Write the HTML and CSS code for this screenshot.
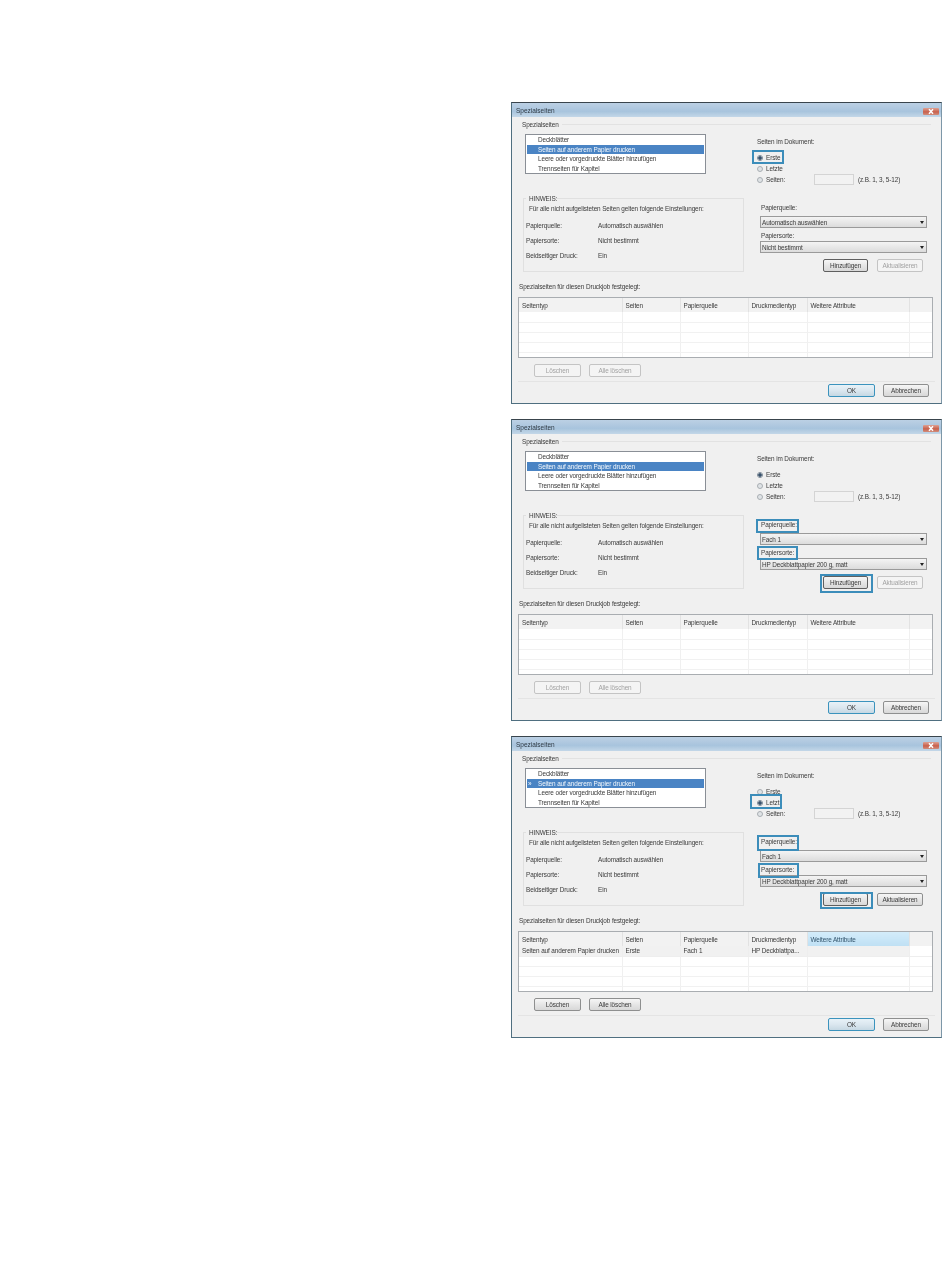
FILE: index.html
```html
<!DOCTYPE html>
<html lang="de">
<head>
<meta charset="utf-8">
<title>Spezialseiten</title>
<link rel="stylesheet" href="styles.css">
</head>
<body>
<main class="page">

<section class="dialog">
  <header class="titlebar"><span>Spezialseiten</span><span class="close"><svg viewBox="0 0 16 7" width="16" height="7"><path d="M6 1.2l4 4.6M10 1.2l-4 4.6" stroke="#fff" stroke-width="1.5"/></svg></span></header>
  <div class="content">
    <div class="section-head"><span>Spezialseiten</span><i></i></div>
    <div class="upper">
      <ul class="listbox"><li>Deckblätter</li><li class="sel">Seiten auf anderem Papier drucken</li><li>Leere oder vorgedruckte Blätter hinzufügen</li><li>Trennseiten für Kapitel</li></ul>
      <div class="pages">
        <div class="pages-title">Seiten im Dokument:</div>
        <div class="radio"><b class="dot on"></b>Erste</div>
        <div class="radio"><b class="dot"></b>Letzte</div>
        <div class="radio"><b class="dot"></b><span class="r-label">Seiten:</span><span class="field"></span><span>(z.B. 1, 3, 5-12)</span></div>
      </div>
      <div class="hint">
        <div class="hint-title">HINWEIS:</div>
        <div class="hint-text">Für alle nicht aufgelisteten Seiten gelten folgende Einstellungen:</div>
        <div class="hint-row"><span>Papierquelle:</span><span>Automatisch auswählen</span></div>
        <div class="hint-row"><span>Papiersorte:</span><span>Nicht bestimmt</span></div>
        <div class="hint-row"><span>Beidseitiger Druck:</span><span>Ein</span></div>
      </div>
      <div class="paper">
        <div class="p-label">Papierquelle:</div>
        <div class="select"><span>Automatisch auswählen</span><b></b></div>
        <div class="p-label two">Papiersorte:</div>
        <div class="select"><span>Nicht bestimmt</span><b></b></div>
        <div class="add-row"><span class="btn strong">Hinzufügen</span><span class="btn off">Aktualisieren</span></div>
      </div>
    </div>
    <div class="table-title">Spezialseiten für diesen Druckjob festgelegt:</div>
    <div class="table-wrap"><table>
      <thead><tr><th>Seitentyp</th><th>Seiten</th><th>Papierquelle</th><th>Druckmedientyp</th><th>Weitere Attribute</th><th></th></tr></thead>
      <tbody><tr><td></td><td></td><td></td><td></td><td></td><td></td></tr><tr><td></td><td></td><td></td><td></td><td></td><td></td></tr><tr><td></td><td></td><td></td><td></td><td></td><td></td></tr><tr><td></td><td></td><td></td><td></td><td></td><td></td></tr><tr><td></td><td></td><td></td><td></td><td></td><td></td></tr></tbody>
    </table></div>
    <div class="delete-row"><span class="btn off del">Löschen</span><span class="btn off delall">Alle löschen</span></div>
    <div class="footer"><span class="btn ok">OK</span><span class="btn">Abbrechen</span></div>
  </div>
  <div class="mark m1-erste"></div>
</section>

<section class="dialog">
  <header class="titlebar"><span>Spezialseiten</span><span class="close"><svg viewBox="0 0 16 7" width="16" height="7"><path d="M6 1.2l4 4.6M10 1.2l-4 4.6" stroke="#fff" stroke-width="1.5"/></svg></span></header>
  <div class="content">
    <div class="section-head"><span>Spezialseiten</span><i></i></div>
    <div class="upper">
      <ul class="listbox"><li>Deckblätter</li><li class="sel">Seiten auf anderem Papier drucken</li><li>Leere oder vorgedruckte Blätter hinzufügen</li><li>Trennseiten für Kapitel</li></ul>
      <div class="pages">
        <div class="pages-title">Seiten im Dokument:</div>
        <div class="radio"><b class="dot on"></b>Erste</div>
        <div class="radio"><b class="dot"></b>Letzte</div>
        <div class="radio"><b class="dot"></b><span class="r-label">Seiten:</span><span class="field"></span><span>(z.B. 1, 3, 5-12)</span></div>
      </div>
      <div class="hint">
        <div class="hint-title">HINWEIS:</div>
        <div class="hint-text">Für alle nicht aufgelisteten Seiten gelten folgende Einstellungen:</div>
        <div class="hint-row"><span>Papierquelle:</span><span>Automatisch auswählen</span></div>
        <div class="hint-row"><span>Papiersorte:</span><span>Nicht bestimmt</span></div>
        <div class="hint-row"><span>Beidseitiger Druck:</span><span>Ein</span></div>
      </div>
      <div class="paper">
        <div class="p-label">Papierquelle:</div>
        <div class="select"><span>Fach 1</span><b></b></div>
        <div class="p-label two">Papiersorte:</div>
        <div class="select"><span>HP Deckblattpapier 200 g, matt</span><b></b></div>
        <div class="add-row"><span class="btn strong">Hinzufügen</span><span class="btn off">Aktualisieren</span></div>
      </div>
    </div>
    <div class="table-title">Spezialseiten für diesen Druckjob festgelegt:</div>
    <div class="table-wrap"><table>
      <thead><tr><th>Seitentyp</th><th>Seiten</th><th>Papierquelle</th><th>Druckmedientyp</th><th>Weitere Attribute</th><th></th></tr></thead>
      <tbody><tr><td></td><td></td><td></td><td></td><td></td><td></td></tr><tr><td></td><td></td><td></td><td></td><td></td><td></td></tr><tr><td></td><td></td><td></td><td></td><td></td><td></td></tr><tr><td></td><td></td><td></td><td></td><td></td><td></td></tr><tr><td></td><td></td><td></td><td></td><td></td><td></td></tr></tbody>
    </table></div>
    <div class="delete-row"><span class="btn off del">Löschen</span><span class="btn off delall">Alle löschen</span></div>
    <div class="footer"><span class="btn ok">OK</span><span class="btn">Abbrechen</span></div>
  </div>
  <div class="mark m2-quelle"></div>
  <div class="mark m2-sorte"></div>
  <div class="mark m-add"></div>
</section>

<section class="dialog">
  <header class="titlebar"><span>Spezialseiten</span><span class="close"><svg viewBox="0 0 16 7" width="16" height="7"><path d="M6 1.2l4 4.6M10 1.2l-4 4.6" stroke="#fff" stroke-width="1.5"/></svg></span></header>
  <div class="content">
    <div class="section-head"><span>Spezialseiten</span><i></i></div>
    <div class="upper">
      <ul class="listbox"><li>Deckblätter</li><li class="sel"><em>»</em>Seiten auf anderem Papier drucken</li><li>Leere oder vorgedruckte Blätter hinzufügen</li><li>Trennseiten für Kapitel</li></ul>
      <div class="pages">
        <div class="pages-title">Seiten im Dokument:</div>
        <div class="radio"><b class="dot"></b>Erste</div>
        <div class="radio"><b class="dot on"></b>Letzt</div>
        <div class="radio"><b class="dot"></b><span class="r-label">Seiten:</span><span class="field"></span><span>(z.B. 1, 3, 5-12)</span></div>
      </div>
      <div class="hint">
        <div class="hint-title">HINWEIS:</div>
        <div class="hint-text">Für alle nicht aufgelisteten Seiten gelten folgende Einstellungen:</div>
        <div class="hint-row"><span>Papierquelle:</span><span>Automatisch auswählen</span></div>
        <div class="hint-row"><span>Papiersorte:</span><span>Nicht bestimmt</span></div>
        <div class="hint-row"><span>Beidseitiger Druck:</span><span>Ein</span></div>
      </div>
      <div class="paper">
        <div class="p-label">Papierquelle:</div>
        <div class="select"><span>Fach 1</span><b></b></div>
        <div class="p-label two">Papiersorte:</div>
        <div class="select"><span>HP Deckblattpapier 200 g, matt</span><b></b></div>
        <div class="add-row"><span class="btn strong">Hinzufügen</span><span class="btn">Aktualisieren</span></div>
      </div>
    </div>
    <div class="table-title">Spezialseiten für diesen Druckjob festgelegt:</div>
    <div class="table-wrap"><table>
      <thead><tr><th>Seitentyp</th><th>Seiten</th><th>Papierquelle</th><th>Druckmedientyp</th><th class="hot">Weitere Attribute</th><th></th></tr></thead>
      <tbody><tr class="filled"><td>Seiten auf anderem Papier drucken</td><td>Erste</td><td>Fach 1</td><td>HP Deckblattpa...</td><td></td><td class="blank"></td></tr><tr><td></td><td></td><td></td><td></td><td></td><td></td></tr><tr><td></td><td></td><td></td><td></td><td></td><td></td></tr><tr><td></td><td></td><td></td><td></td><td></td><td></td></tr><tr><td></td><td></td><td></td><td></td><td></td><td></td></tr></tbody>
    </table></div>
    <div class="delete-row"><span class="btn del">Löschen</span><span class="btn delall">Alle löschen</span></div>
    <div class="footer"><span class="btn ok">OK</span><span class="btn">Abbrechen</span></div>
  </div>
  <div class="mark m3-letzte"></div>
  <div class="mark m3-quelle"></div>
  <div class="mark m3-sorte"></div>
  <div class="mark m-add m3-add"></div>
</section>

</main>
</body>
</html>
```
FILE: styles.css
```css
* { box-sizing: border-box; }
html, body { margin: 0; padding: 0; background: #fff; }
body { font-family: "Liberation Sans", Arial, sans-serif; font-size: 6.4px; letter-spacing: -0.11px; line-height: 9px; color: #3a3a3a; height: 1265px; overflow: hidden; }
.page { display: flex; flex-direction: column; gap: 15px; padding: 102px 0 0 511px; }

.dialog { position: relative; width: 431px; height: 302px; display: flex; flex-direction: column; border: 1px solid #4f6f80; border-top-color: #39444c; border-right-color: #7d97a8; background: #f0f0f0; filter: blur(0.22px); }
.titlebar { height: 14px; flex: none; display: flex; align-items: center; justify-content: space-between; padding: 0 2px 0 4px; background: linear-gradient(#bcd0e4, #a8c4dd 60%, #c3d7e8); color: #2f3a44; font-size: 6.5px; letter-spacing: 0; }
.close { width: 16px; height: 7px; display: block; background: linear-gradient(#dda193, #c9604c 55%, #d08d7c); border-radius: 1px; margin-top: 3px; }
.close svg { display: block; }
.content { flex: 1; display: flex; flex-direction: column; padding: 0 8px 0 6px; }

.section-head { display: flex; align-items: center; gap: 3px; height: 14px; padding-left: 4px; }
.section-head i { flex: 1; height: 1px; background: #e2e2e2; margin-right: 2px; }

.upper { display: grid; grid-template-columns: 232px 1fr; grid-template-rows: 64px 76px; padding-left: 5px; margin-top: 3px; }
.listbox { list-style: none; margin: 0 0 0 2px; padding: 0 1px; width: 181px; height: 40px; background: #fff; border: 1px solid #8a8f96; position: relative; }
.listbox li { height: 9.5px; line-height: 9.5px; padding-left: 11px; white-space: nowrap; position: relative; }
.listbox .sel { background: #4a84c4; color: #f4f8fc; }
.listbox em { position: absolute; left: 1px; top: 0; font-style: normal; }

.pages { padding: 3px 0 0 0; margin-left: 2px; }
.pages-title { height: 15px; line-height: 9px; }
.radio { display: flex; align-items: center; height: 11.2px; gap: 3px; }
.dot { width: 6px; height: 6px; border-radius: 50%; border: 1px solid #a9aeb3; background: #dfe3e6; flex: none; }
.dot.on { border-color: #7d8a96; background: radial-gradient(circle, #39526c 0 1.5px, #f4f6f8 2px); }
.r-label { width: 45px; }
.field { width: 40px; height: 11px; border: 1px solid #d4d4d4; background: #f2f2f2; margin-right: 1px; }

.hint { margin: 0; width: 221px; height: 74px; border: 1px solid #e0e0e0; padding: 0 3px 0 2px; }
.hint-title { margin: -4px 0 0 0; background: #f0f0f0; width: 28px; padding-left: 3px; height: 8px; line-height: 8px; }
.hint-text { margin-left: 3px; height: 9px; margin-top: 1px; white-space: nowrap; }
.hint-row { display: grid; grid-template-columns: 72px 1fr; height: 15px; align-items: center; }
.hint-text + .hint-row { margin-top: 5px; }

.paper { margin-left: 5px; }
.p-label { height: 9px; padding-left: 1px; margin-top: 5px; margin-bottom: 4px; }
.p-label.two { margin-top: 3px; margin-bottom: 1px; }
.select { width: 167px; height: 12px; border: 1px solid #9a9a9a; background: linear-gradient(#f4f4f4, #dcdcdc); display: flex; align-items: center; justify-content: space-between; padding: 0 2px 0 1px; }
.select b { width: 0; height: 0; border: 2.5px solid transparent; border-top: 3px solid #222; border-bottom: 0; }
.add-row { display: flex; gap: 9px; padding-left: 63px; margin-top: 6px; }

.btn { display: flex; align-items: center; justify-content: center; width: 46px; height: 13px; border: 1px solid #8e8f8f; border-radius: 2px; background: linear-gradient(#f6f6f6, #e6e6e6 50%, #d8d8d8); flex: none; }
.btn.strong { border-color: #5f5f5f; width: 45px; }
.btn.off { border-color: #c4c4c4; color: #a2a2a2; background: #f4f4f4; }
.btn.ok { border-color: #3b93bd; background: linear-gradient(#e8f2f8, #dbe7ef 50%, #c6d8e3); width: 47px; }

.table-title { height: 9px; margin-top: 8px; margin-left: 1px; white-space: nowrap; }
.table-wrap { margin-top: 6px; width: 415px; height: 61px; overflow: hidden; background: #fff; border: 1px solid #a9adb1; }
table { border-collapse: collapse; table-layout: fixed; width: 413px; }
th:nth-child(1) { width: 103px; }
th:nth-child(2) { width: 58px; }
th:nth-child(3) { width: 68px; }
th:nth-child(4) { width: 59px; }
th:nth-child(5) { width: 102px; }
th { height: 14px; background: #f2f2f2; font-weight: normal; text-align: left; padding: 0 0 0 3px; border-right: 1px solid #e2e2e2; white-space: nowrap; }
th:last-child { border-right: 0; }
th.hot { background: linear-gradient(#d3ecfa, #bfe0f4); color: #31536b; }
td { height: 10px; border-right: 1px solid #f0f0f0; border-bottom: 1px solid #f1f1f1; padding: 0 0 0 3px; white-space: nowrap; overflow: hidden; }
td:last-child { border-right: 0; }
.filled td { background: #f1f1f1; border-color: #eeeeee; }
.filled td.blank { background: #fff; }

.delete-row { display: flex; gap: 8px; padding-left: 16px; height: 17px; margin-top: 6px; }
.btn.del { width: 47px; }
.btn.delall { width: 52px; }
.footer { display: flex; justify-content: flex-end; gap: 8px; border-top: 1px solid #e4e4e4; padding: 2px 6px 0 0; margin: 0 -2px 0 0; height: 20px; }

.mark { position: absolute; border: 2px solid #3c8dba; }
.m1-erste { left: 240px; top: 47px; width: 32px; height: 14px; }
.m2-quelle { left: 244px; top: 99px; width: 43px; height: 14px; }
.m2-sorte { left: 245px; top: 126px; width: 41px; height: 14px; }
.m-add { left: 308px; top: 154px; width: 53px; height: 19px; }
.m3-letzte { left: 238px; top: 57px; width: 32px; height: 15px; }
.m3-quelle { left: 245px; top: 98px; width: 42px; height: 16px; }
.m3-sorte { left: 246px; top: 126px; width: 41px; height: 15px; }
.m3-add { top: 155px; height: 17px; }
```
